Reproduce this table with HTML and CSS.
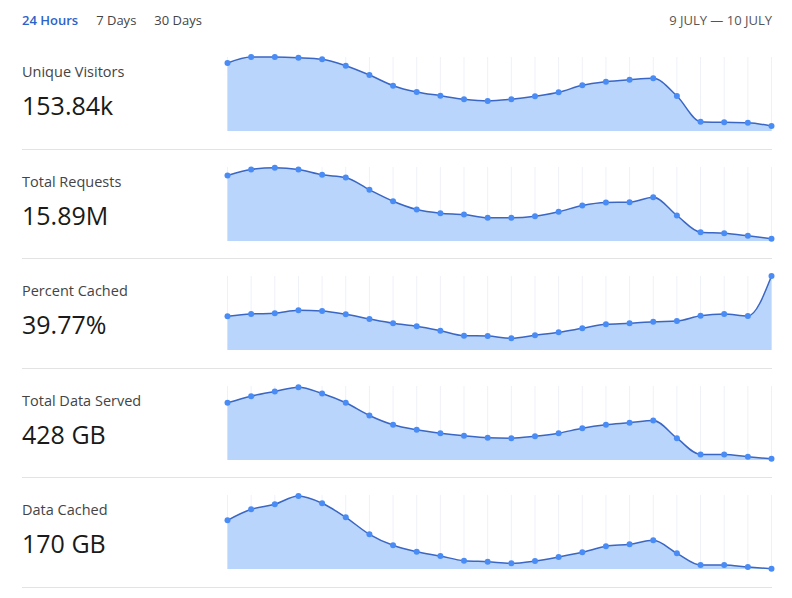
FILE: index.html
```html
<!DOCTYPE html>
<html lang="en">
<head>
<meta charset="utf-8">
<title>Analytics</title>
<link rel="stylesheet" href="styles.css">
</head>
<body>
<div class="page">
  <header class="topbar">
    <nav class="ranges">
      <span class="range active">24 Hours</span>
      <span class="range">7 Days</span>
      <span class="range">30 Days</span>
    </nav>
    <div class="dates">9 JULY — 10 JULY</div>
  </header>

  <section class="row">
    <div class="stat"><div class="label">Unique Visitors</div><div class="value">153.84k</div></div>
    <svg class="chart" data-series="6,0,0,0.7,2.3,8.7,18,28.7,35,38.7,42.3,44,42.3,39.3,35.3,28.3,24.7,22.7,21.3,39,64.7,65.3,65.7,69"></svg>
  </section>
  <section class="row">
    <div class="stat"><div class="label">Total Requests</div><div class="value">15.89M</div></div>
    <svg class="chart" data-series="8.5,2.5,0.8,2.5,7.8,10.5,22.8,34.2,42.5,46.2,47.5,50.8,50.8,49.2,44.8,38.5,35.5,35.2,30.2,48.5,65.2,66.2,68.8,71.8"></svg>
  </section>
  <section class="row">
    <div class="stat"><div class="label">Percent Cached</div><div class="value">39.77%</div></div>
    <svg class="chart" data-series="40.3,38,37.3,34.3,35,38.3,43,47.3,50.3,54.7,59.7,60,62.3,59.3,56.3,52.3,48.3,47.3,45.7,45,39.7,38,40,0"></svg>
  </section>
  <section class="row">
    <div class="stat"><div class="label">Total Data Served</div><div class="value">428 GB</div></div>
    <svg class="chart" data-series="16.8,10.2,5.5,1.2,7.5,16.8,29.5,38.8,43.8,47.2,49.8,51.8,52.2,50.2,47.2,42.2,38.8,36.8,34.5,52.2,68.5,68.5,70.8,72.8"></svg>
  </section>
  <section class="row">
    <div class="stat"><div class="label">Data Cached</div><div class="value">170 GB</div></div>
    <svg class="chart" data-series="25.3,14.3,9.3,1,8.3,22.3,39.3,50.3,56.7,61,65.7,66.7,68.3,66,62,57.3,51.3,49.3,45.3,58.3,70,70,72,73.7"></svg>
  </section>
</div>
<script src="script.js"></script>
</body>
</html>
```

FILE: styles.css
```css
* { box-sizing: border-box; }
html, body { margin: 0; padding: 0; background: #ffffff; }
body {
  font-family: "Open Sans", "Noto Sans", sans-serif;
  color: #222;
}
.page {
  width: 772px;
  padding-left: 22px;
}
.topbar {
  height: 40px;
  display: flex;
  align-items: center;
  justify-content: space-between;
}
.ranges {
  display: flex;
  gap: 18px;
}
.range {
  font-size: 13px;
  color: #444;
}
.range.active {
  color: #2d63c8;
  font-weight: 600;
}
.dates {
  font-size: 13px;
  color: #555;
}
.row {
  display: grid;
  grid-template-columns: 205px 1fr;
  padding-top: 17px;
  padding-bottom: 17.5px;
  border-bottom: 1px solid #e3e3e3;
}
.stat {
  padding-top: 5px;
}
.label {
  font-size: 14.5px;
  line-height: 20px;
  color: #444;
}
.value {
  margin-top: 7px;
  font-size: 25px;
  line-height: 32px;
  font-weight: 500;
  color: #1a1a1a;
}
.chart {
  display: block;
  width: 545px;
  height: 74px;
  overflow: visible;
}
.grid-line { stroke: #eff1f9; stroke-width: 1; }
.area { fill: #b9d5fb; }
.line { fill: none; stroke: #3a66c4; stroke-width: 1.5; }
.dot { fill: #4a8cf5; }
```

FILE: script.js
```js
(function () {
  var NS = "http://www.w3.org/2000/svg";
  var W = 544, H = 74, N = 24;
  function sign(v) { return v < 0 ? -1 : 1; }
  function slope3(x0, y0, x1, y1, x2, y2) {
    var h0 = x1 - x0, h1 = x2 - x1, s0 = (y1 - y0) / h0, s1 = (y2 - y1) / h1,
        p = (s0 * h1 + s1 * h0) / (h0 + h1);
    return (sign(s0) + sign(s1)) * Math.min(Math.abs(s0), Math.abs(s1), 0.5 * Math.abs(p)) || 0;
  }
  function slope2(x0, y0, x1, y1, t) {
    var h = x1 - x0;
    return h ? (3 * (y1 - y0) / h - t) / 2 : t;
  }
  function curve(pts) {
    var n = pts.length, t = [], i;
    for (i = 1; i < n - 1; i++) t[i] = slope3(pts[i-1][0], pts[i-1][1], pts[i][0], pts[i][1], pts[i+1][0], pts[i+1][1]);
    t[0] = slope2(pts[0][0], pts[0][1], pts[1][0], pts[1][1], t[1]);
    t[n-1] = slope2(pts[n-2][0], pts[n-2][1], pts[n-1][0], pts[n-1][1], t[n-2]);
    var d = "M" + pts[0][0] + "," + pts[0][1];
    for (i = 0; i < n - 1; i++) {
      var dx = (pts[i+1][0] - pts[i][0]) / 3;
      d += "C" + (pts[i][0] + dx) + "," + (pts[i][1] + dx * t[i]) + "," +
           (pts[i+1][0] - dx) + "," + (pts[i+1][1] - dx * t[i+1]) + "," +
           pts[i+1][0] + "," + pts[i+1][1];
    }
    return d;
  }
  function el(name, attrs, parent) {
    var e = document.createElementNS(NS, name);
    for (var k in attrs) e.setAttribute(k, attrs[k]);
    parent.appendChild(e);
    return e;
  }
  var charts = document.querySelectorAll(".chart");
  for (var c = 0; c < charts.length; c++) {
    var svg = charts[c];
    svg.setAttribute("viewBox", "0 0 545 74");
    var ys = svg.getAttribute("data-series").split(",").map(Number);
    var pts = ys.map(function (y, i) { return [i * W / (N - 1) + 0.5, y]; });
    for (var i = 0; i < N; i++) {
      el("line", { "class": "grid-line", x1: pts[i][0], x2: pts[i][0], y1: 0, y2: H }, svg);
    }
    var line = curve(pts);
    el("path", { "class": "area", d: line + "L" + pts[N-1][0] + "," + H + "L" + pts[0][0] + "," + H + "Z" }, svg);
    el("path", { "class": "line", d: line }, svg);
    for (var j = 0; j < N; j++) {
      el("circle", { "class": "dot", cx: pts[j][0], cy: pts[j][1], r: 3 }, svg);
    }
  }
})();
```
